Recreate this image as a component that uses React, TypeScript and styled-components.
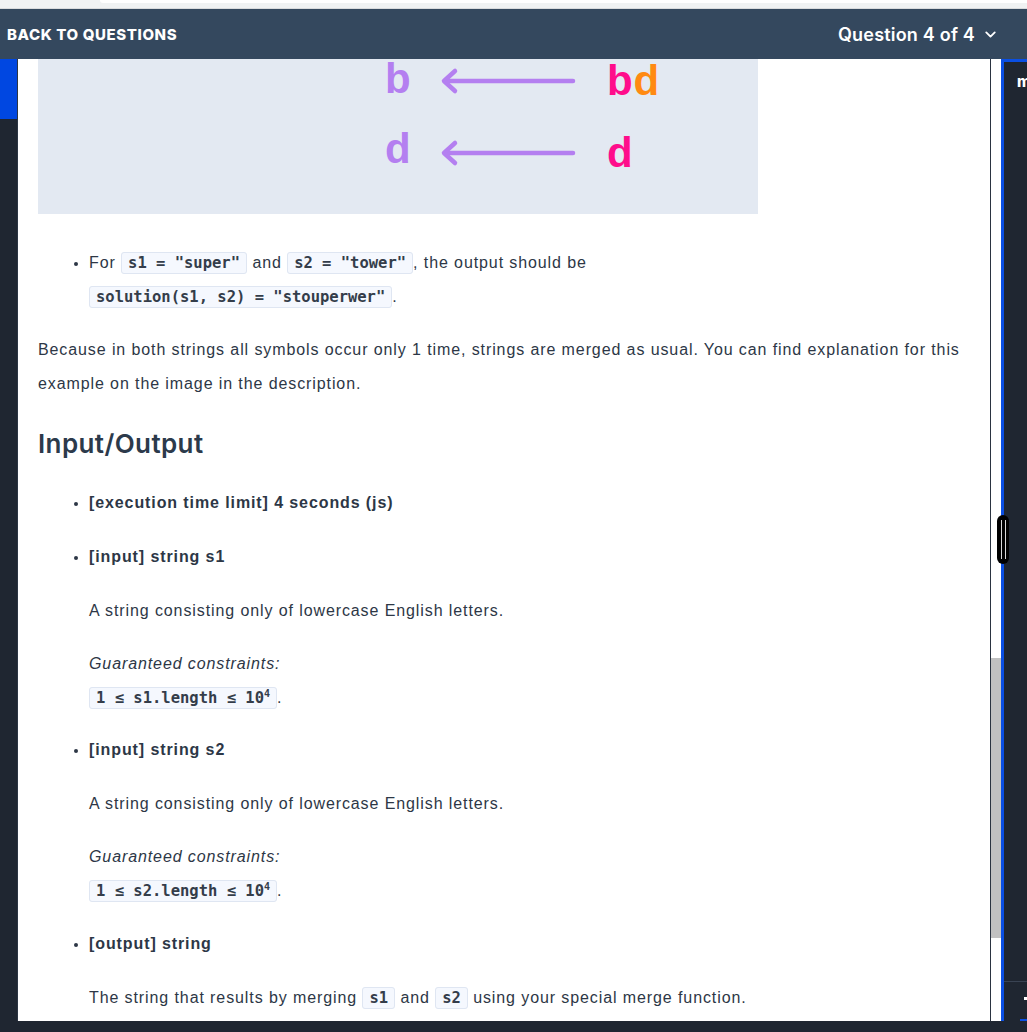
import React from "react";
import styled, { createGlobalStyle } from "styled-components";
import { ChevronDown } from "lucide-react";

const GlobalStyle = createGlobalStyle`
  html, body { margin: 0; padding: 0; background: #1f2631; }
  body { font-family: "Liberation Sans", Arial, sans-serif; overflow: hidden; }
  #root { width: 1027px; height: 1032px; }
`;

const Page = styled.div`
  position: relative;
  width: 1027px;
  height: 1032px;
  display: flex;
  flex-direction: column;
  overflow: hidden;
  background: #1f2631;
`;

const BrowserStrip = styled.div`
  height: 8px;
  background: #f0f2f3;
  border-bottom: 1px solid #d9dbdd;
  display: flex;
  justify-content: flex-end;
`;

const StripTab = styled.div`
  width: 927px;
  height: 3px;
  background: #ffffff;
  border-bottom-left-radius: 8px;
`;

const Header = styled.header`
  height: 50px;
  flex: none;
  background: #34485e;
  display: flex;
  align-items: center;
  justify-content: space-between;
  padding: 0 28px 0 7px;
  color: #ffffff;
`;

const BackLink = styled.span`
  font-family: Inter, "Noto Sans", sans-serif;
  font-weight: 800;
  font-size: 15px;
  letter-spacing: 0.6px;
  text-transform: uppercase;
`;

const QuestionPicker = styled.span`
  display: flex;
  align-items: center;
  gap: 7px;
  font-family: Inter, "Noto Sans", sans-serif;
  font-weight: 600;
  font-size: 18px;
  letter-spacing: 0.2px;
`;

const Main = styled.div`
  flex: 1;
  display: flex;
  min-height: 0;
`;

const LeftRail = styled.div`
  width: 17px;
  flex: none;
  background: #1f2631;
  border-right: 1px solid #2c3644;
  display: flex;
  flex-direction: column;
`;

const RailActive = styled.div`
  height: 60px;
  background: #0047e1;
`;

const ContentPanel = styled.div`
  width: 973px;
  flex: none;
  box-sizing: border-box;
  background: #ffffff;
  border-right: 1px solid #2a3341;
  padding: 0 20px 0 20px;
  overflow: hidden;
  color: #2d3746;
  font-size: 16px;
  line-height: 34px;
  letter-spacing: 0.9px;
`;

const ImageBox = styled.div`
  width: 720px;
  height: 155px;
  background: #e3e9f2;
  display: flex;
`;

const BulletList = styled.ul<{ $top: number }>`
  margin: ${(p) => p.$top}px 0 0 0;
  padding: 0 0 0 51px;
  list-style: disc;
`;

const Item = styled.li<{ $gap?: number }>`
  margin-top: ${(p) => p.$gap ?? 0}px;
  &::marker { font-size: 14px; }
`;

const Label = styled.div`
  font-weight: 700;
  letter-spacing: 0.9px;
`;

const Para = styled.p<{ $top: number }>`
  margin: ${(p) => p.$top}px 0 0 0;
`;

const Note = styled.p`
  margin: 19px 0 0 0;
  font-style: italic;
`;

const CodeLine = styled.div``;

const Heading = styled.h3`
  margin: 25px 0 0 0;
  font-family: Inter, "Noto Sans", sans-serif;
  font-weight: 600;
  font-size: 26px;
  line-height: 36px;
  letter-spacing: 0.4px;
  color: #2c3a4b;
`;

const Code = styled.code`
  font-family: "DejaVu Sans Mono", "Liberation Mono", monospace;
  font-weight: 700;
  font-size: 15.5px;
  letter-spacing: 0;
  color: #343d4a;
  background: #f5f8fe;
  border: 1px solid #dfe6f2;
  border-radius: 3px;
  padding: 1px 6px;
  white-space: nowrap;
  sup { font-size: 10px; line-height: 0; }
`;

const ScrollTrack = styled.div`
  width: 10px;
  flex: none;
  background: #ffffff;
  display: flex;
  flex-direction: column;
`;

const ScrollThumb = styled.div<{ $top: number; $height: number }>`
  margin-top: ${(p) => p.$top}px;
  height: ${(p) => p.$height}px;
  background: #c1c1c1;
`;

const RightPanel = styled.div`
  flex: 1;
  background: #1f2631;
  border-left: 3px solid #0a4fe3;
  border-top: 3px solid #0a4fe3;
  display: flex;
  flex-direction: column;
  overflow: hidden;
`;

const PanelTitle = styled.div`
  padding: 10px 0 0 13px;
  font-family: Inter, "Noto Sans", sans-serif;
  font-weight: 800;
  font-size: 15px;
  line-height: 20px;
  color: #ffffff;
  white-space: nowrap;
`;

const PanelFooter = styled.div`
  margin-top: auto;
  height: 39px;
  border-top: 1px solid #394353;
  display: flex;
  flex-direction: column;
  align-items: flex-end;
`;

const FooterDot = styled.div`
  margin-top: 15px;
  width: 3px;
  height: 3px;
  background: #ffffff;
`;

const FooterBar = styled.div`
  margin-top: auto;
  width: 7px;
  height: 2px;
  background: #0a4fe3;
`;

const BottomBar = styled.div`
  height: 11px;
  flex: none;
  background: #1f2631;
`;

const ResizeHandle = styled.div`
  position: absolute;
  left: 997px;
  top: 515px;
  width: 12px;
  height: 49px;
  background: #000000;
  border-radius: 6px;
  display: flex;
  justify-content: center;
  gap: 3px;
  padding-top: 5px;
  box-sizing: border-box;
  &::before, &::after {
    content: "";
    width: 1px;
    height: 39px;
    background: #d8d8d8;
  }
`;

const Diagram = () => (
  <svg width="720" height="155" viewBox="0 0 720 155">
    <g
      fontFamily='"Liberation Sans Narrow", "Liberation Sans", Arial, sans-serif'
      fontWeight="700"
      fontSize="42"
    >
      <text x="347" y="34" fill="#b47ff0">b</text>
      <text x="569" y="36" fill="#ff0d8b">b<tspan fill="#ff8a12">d</tspan></text>
      <text x="347" y="104" fill="#b47ff0">d</text>
      <text x="569" y="108" fill="#ff0d8b">d</text>
    </g>
    <g stroke="#b47ff0" strokeWidth="4.5" fill="none" strokeLinecap="round" strokeLinejoin="round">
      <line x1="407" y1="22" x2="535" y2="22" />
      <polyline points="417,12 406,22 417,32" />
      <line x1="407" y1="94" x2="535" y2="94" />
      <polyline points="417,84 406,94 417,104" />
    </g>
  </svg>
);

export default function App() {
  return (
    <>
      <GlobalStyle />
      <Page>
        <BrowserStrip>
          <StripTab />
        </BrowserStrip>
        <Header>
          <BackLink>Back to questions</BackLink>
          <QuestionPicker>
            Question 4 of 4
            <ChevronDown size={17} strokeWidth={2.6} />
          </QuestionPicker>
        </Header>
        <Main>
          <LeftRail>
            <RailActive />
          </LeftRail>
          <ContentPanel>
            <ImageBox>
              <Diagram />
            </ImageBox>
            <BulletList $top={32}>
              <Item>
                For <Code>s1 = "super"</Code> and <Code>s2 = "tower"</Code>, the output should be
                <br />
                <Code>solution(s1, s2) = "stouperwer"</Code>.
              </Item>
            </BulletList>
            <Para $top={19}>
              Because in both strings all symbols occur only 1 time, strings are merged as usual. You can find
              explanation for this example on the image in the description.
            </Para>
            <Heading>Input/Output</Heading>
            <BulletList $top={24}>
              <Item>
                <Label>[execution time limit] 4 seconds (js)</Label>
              </Item>
              <Item $gap={20}>
                <Label>[input] string s1</Label>
                <Para $top={20}>A string consisting only of lowercase English letters.</Para>
                <Note>Guaranteed constraints:</Note>
                <CodeLine>
                  <Code>
                    1 ≤ s1.length ≤ 10<sup>4</sup>
                  </Code>
                  .
                </CodeLine>
              </Item>
              <Item $gap={18}>
                <Label>[input] string s2</Label>
                <Para $top={20}>A string consisting only of lowercase English letters.</Para>
                <Note>Guaranteed constraints:</Note>
                <CodeLine>
                  <Code>
                    1 ≤ s2.length ≤ 10<sup>4</sup>
                  </Code>
                  .
                </CodeLine>
              </Item>
              <Item $gap={19}>
                <Label>[output] string</Label>
                <Para $top={20}>
                  The string that results by merging <Code>s1</Code> and <Code>s2</Code> using your special merge
                  function.
                </Para>
              </Item>
            </BulletList>
          </ContentPanel>
          <ScrollTrack>
            <ScrollThumb $top={599} $height={280} />
          </ScrollTrack>
          <RightPanel>
            <PanelTitle>m</PanelTitle>
            <PanelFooter>
              <FooterDot />
              <FooterBar />
            </PanelFooter>
          </RightPanel>
        </Main>
        <BottomBar />
        <ResizeHandle />
      </Page>
    </>
  );
}
